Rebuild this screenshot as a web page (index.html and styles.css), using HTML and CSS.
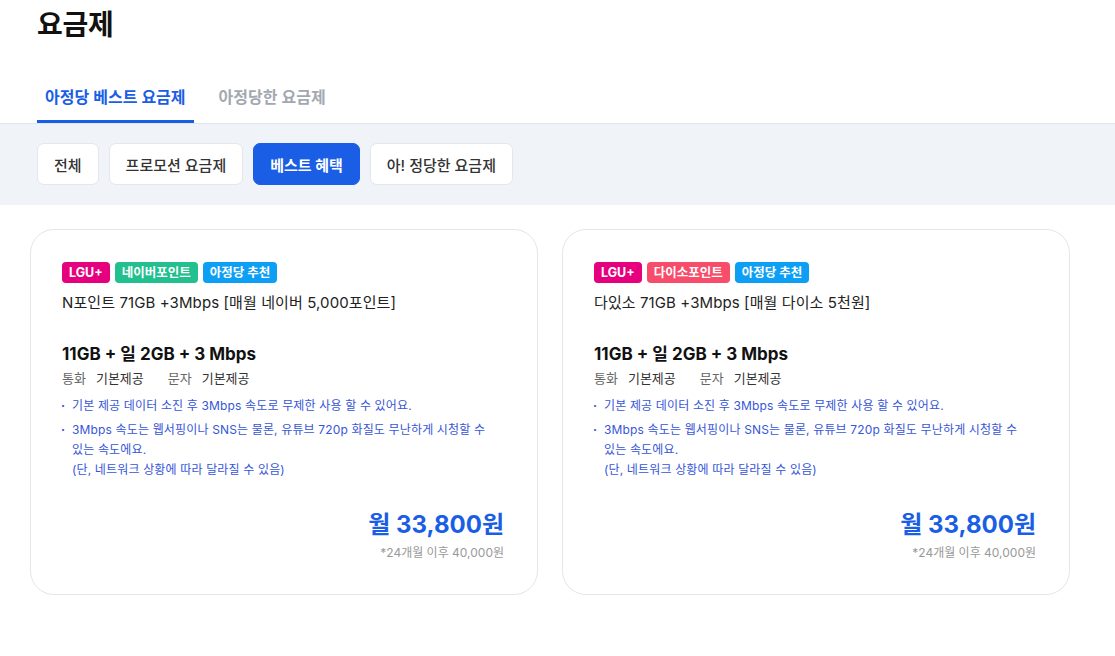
FILE: index.html
```html
<!DOCTYPE html>
<html lang="ko">
<head>
<meta charset="utf-8">
<title>요금제</title>
<link rel="stylesheet" href="styles.css">
</head>
<body>
<header class="head">
  <h1 class="title">요금제</h1>
  <nav class="tabs">
    <a class="tab active">아정당 베스트 요금제</a>
    <a class="tab">아정당한 요금제</a>
  </nav>
</header>
<section class="filter">
  <button class="chip">전체</button>
  <button class="chip">프로모션 요금제</button>
  <button class="chip on">베스트 혜택</button>
  <button class="chip">아! 정당한 요금제</button>
</section>
<main class="cards">
  <article class="card">
    <div class="badges">
      <span class="badge lgu">LGU+</span>
      <span class="badge naver">네이버포인트</span>
      <span class="badge rec">아정당 추천</span>
    </div>
    <p class="name">N포인트 71GB +3Mbps [매월 네이버 5,000포인트]</p>
    <p class="spec">11GB + 일 2GB + 3 Mbps</p>
    <p class="calls"><span class="lbl">통화</span><span class="val">기본제공</span><span class="lbl">문자</span><span class="val">기본제공</span></p>
    <ul class="notes">
      <li>기본 제공 데이터 소진 후 3Mbps 속도로 무제한 사용 할 수 있어요.</li>
      <li>3Mbps 속도는 웹서핑이나 SNS는 물론, 유튜브 720p 화질도 무난하게 시청할 수 있는 속도에요.<br>(단, 네트워크 상황에 따라 달라질 수 있음)</li>
    </ul>
    <div class="price">
      <p class="amount">월 33,800원</p>
      <p class="after">*24개월 이후 40,000원</p>
    </div>
  </article>
  <article class="card">
    <div class="badges">
      <span class="badge lgu">LGU+</span>
      <span class="badge daiso">다이소포인트</span>
      <span class="badge rec">아정당 추천</span>
    </div>
    <p class="name">다있소 71GB +3Mbps [매월 다이소 5천원]</p>
    <p class="spec">11GB + 일 2GB + 3 Mbps</p>
    <p class="calls"><span class="lbl">통화</span><span class="val">기본제공</span><span class="lbl">문자</span><span class="val">기본제공</span></p>
    <ul class="notes">
      <li>기본 제공 데이터 소진 후 3Mbps 속도로 무제한 사용 할 수 있어요.</li>
      <li>3Mbps 속도는 웹서핑이나 SNS는 물론, 유튜브 720p 화질도 무난하게 시청할 수 있는 속도에요.<br>(단, 네트워크 상황에 따라 달라질 수 있음)</li>
    </ul>
    <div class="price">
      <p class="amount">월 33,800원</p>
      <p class="after">*24개월 이후 40,000원</p>
    </div>
  </article>
</main>
</body>
</html>
```
FILE: styles.css
```css
* { box-sizing: border-box; }
html, body { margin: 0; padding: 0; background: #fff; }
body {
  font-family: "Inter", "Noto Sans CJK KR", sans-serif;
  color: #222;
  width: 1115px;
}
p { margin: 0; }

.head { padding: 0 0 0 37px; }
.title {
  margin: 0;
  padding-top: 8px;
  font-size: 28px;
  line-height: 34px;
  font-weight: 700;
  color: #111;
  letter-spacing: -0.3px;
}
.tabs {
  display: flex;
  gap: 17px;
  margin-top: 37px;
}
.tab {
  display: block;
  padding: 0 8px;
  height: 44px;
  line-height: 36px;
  font-size: 16px;
  font-weight: 600;
  color: #a3a8b0;
  border-bottom: 3px solid transparent;
}
.tab.active {
  color: #1a5ee6;
  border-bottom-color: #1a5ee6;
}

.filter {
  display: flex;
  gap: 10px;
  padding: 19px 37px 20px;
  background: #f0f3f8;
  border-top: 1px solid #e2e7ee;
}
.chip {
  font-family: inherit;
  height: 42px;
  padding: 0 16px;
  font-size: 15px;
  font-weight: 500;
  color: #333;
  background: #fff;
  border: 1px solid #e3e7ed;
  border-radius: 7px;
}
.chip.on {
  background: #1a5ee6;
  border-color: #1a5ee6;
  color: #fff;
  font-weight: 700;
}

.cards {
  display: flex;
  gap: 24px;
  padding: 24px 30px;
}
.card {
  width: 508px;
  height: 366px;
  border: 1px solid #e4e6ea;
  border-radius: 24px;
  padding: 32px 33px 0 31px;
  display: flex;
  flex-direction: column;
}
.badges { display: flex; gap: 5px; }
.badge {
  height: 21px;
  line-height: 21px;
  padding: 0 7px;
  border-radius: 4px;
  color: #fff;
  font-size: 12.5px;
  font-weight: 700;
}
.lgu { background: #e6007e; }
.naver { background: #22c08f; }
.daiso { background: #f74d6a; }
.rec { background: #0d9ff5; }

.name {
  margin-top: 8px;
  font-size: 15px;
  line-height: 24px;
  color: #222;
  letter-spacing: 0.1px;
}
.spec {
  margin-top: 27px;
  font-size: 17px;
  line-height: 24px;
  font-weight: 700;
  color: #111;
}
.calls {
  margin-top: 2px;
  font-size: 13px;
  line-height: 20px;
  display: flex;
}
.calls .lbl { color: #666; margin-right: 10px; }
.calls .val { color: #333; margin-right: 24px; }

.notes {
  list-style: none;
  margin: 8px 0 0;
  padding: 0;
  font-size: 12px;
  line-height: 20px;
  color: #3656d8;
  word-break: keep-all;
  letter-spacing: 0.15px;
}
.notes li {
  position: relative;
  padding-left: 10px;
  margin-bottom: 4px;
  padding-right: 8px;
}
.notes li::before {
  content: "·";
  position: absolute;
  left: -1px;
  top: 0;
  color: #3656d8;
  font-weight: 700;
}

.price {
  margin-top: auto;
  margin-bottom: 32px;
  text-align: right;
}
.amount {
  font-size: 24px;
  line-height: 30px;
  font-weight: 700;
  color: #1a5ee6;
}
.after {
  margin-top: 4px;
  font-size: 12px;
  line-height: 18px;
  color: #999;
}
```
